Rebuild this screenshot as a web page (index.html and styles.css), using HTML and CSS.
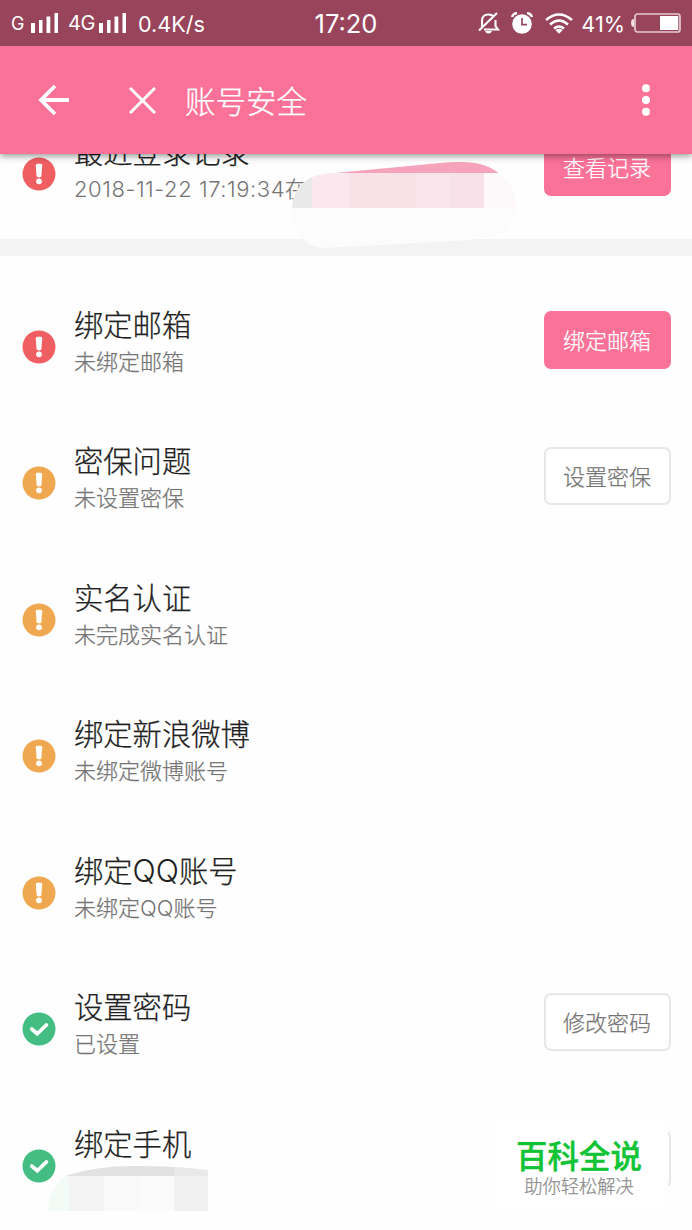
FILE: index.html
```html
<!DOCTYPE html>
<html lang="zh-CN">
<head>
<meta charset="utf-8">
<title>账号安全</title>
<link rel="stylesheet" href="styles.css">
</head>
<body>
<svg class="defs" width="0" height="0">
  <symbol id="warn" viewBox="0 0 34 34"><circle cx="17" cy="17" r="16.5" fill="currentColor"/><path d="M13.8 8.3Q13.8 6.8 15.3 6.8H18.7Q20.2 6.8 20.2 8.3L19.4 19.3Q19.3 20.4 17 20.4T14.6 19.3Z" fill="#fff"/><circle cx="17" cy="24.3" r="2.9" fill="#fff"/></symbol>
  <symbol id="ok" viewBox="0 0 34 34"><circle cx="17" cy="17" r="16.5" fill="currentColor"/><path d="M9.8 17.1L15.2 21.8L24.4 13" fill="none" stroke="#fff" stroke-width="3.8" stroke-linecap="round"/></symbol>
  <symbol id="signal" viewBox="0 0 28 20"><path d="M0 10h4v10H0zM8 7h3.5v13H8zM15.5 3.5h3.8V20h-3.8zM23.5 0h3.5v20h-3.5z" fill="#fff"/></symbol>
</svg>
<div class="screen">
  <div class="status">
    <div class="status-left">
      <span class="net g">G</span><svg class="signal"><use href="#signal"/></svg>
      <span class="net lte">4G</span><svg class="signal"><use href="#signal"/></svg>
      <span class="speed">0.4K/s</span>
    </div>
    <span class="clock">17:20</span>
    <div class="status-right">
      <svg class="bell" width="22" height="22" viewBox="0 0 22 22" fill="none" stroke="#fff" stroke-width="2.1"><path d="M4 15V9Q4 2.5 10.5 2.5Q14 2.5 15.5 4.5M17.5 8V14L20 17.5H6M1 18.5L19 1"/><path d="M7 19h7q-1 2.6-3.5 2.6T7 19z" fill="#fff" stroke="none"/></svg>
      <svg class="alarm" width="22" height="22" viewBox="0 0 22 22"><circle cx="11" cy="12" r="9.8" fill="#fff"/><path d="M1 5Q2 1.5 6 1M21 5Q20 1.5 16 1" fill="none" stroke="#fff" stroke-width="2.3"/><path d="M11 6v6.7h5" fill="none" stroke="#98455c" stroke-width="1.7"/></svg>
      <svg class="wifi" width="28" height="21" viewBox="0 0 28 21" fill="none" stroke="#fff" stroke-width="2.4"><path d="M1 7Q14-4 27 7M5 11.5Q14 3.7 23 11.5M9 15.5Q14 11.3 19 15.5"/><path d="M10.3 17Q14 14.7 17.7 17L14 20.7Z" fill="#fff" stroke="none"/></svg>
      <span class="percent">41%</span>
      <svg class="battery" width="50" height="20" viewBox="0 0 50 20"><rect x="4" y="1" width="45" height="18" rx="2.5" fill="none" stroke="#e4c9d0" stroke-width="1.7"/><path d="M3 6Q0 6 0 10T3 14Z" fill="#f0dfe3"/><path d="M29 3h18.3v14H29z" fill="#fff"/></svg>
    </div>
  </div>
  <header class="appbar">
    <svg class="back" width="32" height="32" viewBox="0 0 32 32" fill="none" stroke="#fff" stroke-width="3.8"><path d="M31 16H3M17 2L3 16L17 30"/></svg>
    <svg class="close" width="27" height="27" viewBox="0 0 27 27" stroke="#fff" stroke-width="3"><path d="M1 1L26 26M26 1L1 26"/></svg>
    <h1 class="heading">账号安全</h1>
    <svg class="more" width="10" height="32" viewBox="0 0 10 32" fill="#fff"><circle cx="5" cy="4.3" r="4"/><circle cx="5" cy="16" r="4"/><circle cx="5" cy="27.7" r="4"/></svg>
  </header>
  <main class="list">
    <section class="row row-log">
      <svg class="icon red"><use href="#warn"/></svg>
      <div class="info"><h2 class="title">最近登录记录</h2><p class="sub"><span class="date">2018-11-22 17:19:34</span>在</p></div>
      <button class="btn primary">查看记录</button>
      <svg class="mask-log" width="226" height="88" viewBox="0 0 226 88">
        <clipPath id="logclip"><path d="M2 50C2 28 14 14 35 12L150 1C190-3 202 5 212 14C222 22 226 33 226 43C226 62 213 75 195 76L180 78L35 86C15 86 2 69 2 50Z"/></clipPath>
        <g clip-path="url(#logclip)"><path fill="#fcfcfc" d="M0 0h226v88H0z"/><path fill="#f5a4bc" d="M0 0h226v11H0z"/><path fill="#e9e9e9" d="M0 11h22v35H0z"/><path fill="#fae8ee" d="M22 11h37v35H22z"/><path fill="#f9e1e8" d="M59 11h67v35H59z"/><path fill="#f9e6ec" d="M126 11h34v35h-34z"/><path fill="#f8e1e8" d="M160 11h34v35h-34z"/><path fill="#fdf9fb" d="M194 11h32v35h-32z"/></g>
      </svg>
    </section>
    <div class="divider"></div>
    <section class="row"><svg class="icon red"><use href="#warn"/></svg><div class="info"><h2 class="title">绑定邮箱</h2><p class="sub">未绑定邮箱</p></div><button class="btn primary">绑定邮箱</button></section>
    <section class="row"><svg class="icon amber"><use href="#warn"/></svg><div class="info"><h2 class="title">密保问题</h2><p class="sub">未设置密保</p></div><button class="btn">设置密保</button></section>
    <section class="row"><svg class="icon amber"><use href="#warn"/></svg><div class="info"><h2 class="title">实名认证</h2><p class="sub">未完成实名认证</p></div></section>
    <section class="row"><svg class="icon amber"><use href="#warn"/></svg><div class="info"><h2 class="title">绑定新浪微博</h2><p class="sub">未绑定微博账号</p></div></section>
    <section class="row"><svg class="icon amber"><use href="#warn"/></svg><div class="info"><h2 class="title">绑定<span class="latin">QQ</span>账号</h2><p class="sub">未绑定<span class="latin">QQ</span>账号</p></div></section>
    <section class="row"><svg class="icon green"><use href="#ok"/></svg><div class="info"><h2 class="title">设置密码</h2><p class="sub">已设置</p></div><button class="btn">修改密码</button></section>
    <section class="row">
      <svg class="icon green"><use href="#ok"/></svg><div class="info"><h2 class="title">绑定手机</h2></div><span class="btn"></span>
      <svg class="mask-phone" width="160" height="45" viewBox="0 0 160 45">
        <clipPath id="phoneclip"><path d="M0 45Q2 19 20 9Q50 0 84 0Q130 0 160 4V45Z"/></clipPath>
        <g clip-path="url(#phoneclip)"><path fill="#e2e2e2" d="M0 0h126v10H0z"/><path fill="#e9e9e9" d="M126 0h34v10h-34z"/><path fill="#f2fbf6" d="M0 10h21v35H0z"/><path fill="#f4f4f4" d="M21 10h35v35H21z"/><path fill="#f9f9f9" d="M56 10h35v35H56z"/><path fill="#fbfbfb" d="M91 10h35v35H91z"/><path fill="#f1f1f1" d="M126 10h34v35h-34z"/></g>
      </svg>
    </section>
  </main>
  <div class="brand"><strong class="brand-name">百科全说</strong><span class="brand-note">助你轻松解决</span></div>
</div>
</body>
</html>
```
FILE: styles.css
```css
* { box-sizing: border-box; }
body { margin: 0; background: #fff; font-family: "Noto Sans CJK SC", sans-serif; font-weight: 300; -webkit-text-stroke: .25px currentColor; }
h1, h2, p { margin: 0; font-weight: 300; }
.defs { position: absolute; }
.screen { position: relative; width: 692px; height: 1230px; overflow: hidden; background: #fefefe; }
.status { position: relative; z-index: 3; display: flex; align-items: center; height: 46px; padding: 0 11px; background: #98455c; color: #fff; font-family: Inter, sans-serif; font-weight: 400; -webkit-text-stroke: 0; }
.status-left, .status-right { display: flex; align-items: center; flex: 1; white-space: nowrap; }
.status-right { justify-content: flex-end; }
.signal { width: 28px; height: 20px; flex: none; }
.net { font-size: 20px; letter-spacing: -.5px; flex: none; }
.g { width: 20px; font-size: 18px; }
.lte { width: 31px; margin-left: 9px; }
.speed { margin-left: 11px; font-size: 21.6px; padding-top: 1px; }
.clock { font-size: 25.5px; width: 64px; text-align: center; padding-top: 1px; }
.alarm { margin-left: 11px; }
.wifi { margin-left: 12px; }
.percent { margin-left: 8px; font-size: 21.7px; padding-top: 1px; }
.battery { margin-left: 6px; }
.appbar { position: relative; z-index: 2; display: flex; align-items: center; height: 108px; padding: 0 41px 0 38px; background: #fb7299; box-shadow: 0 2px 7px rgba(0,0,0,.42); }
.close { margin-left: 59px; }
.heading { margin-left: 29px; color: #fff; font-size: 30.5px; line-height: 40px; }
.more { margin-left: auto; }
.list { margin-top: -71px; }
.row { position: relative; display: flex; align-items: flex-start; height: 136.45px; padding: 0 21px 0 22px; }
.row-log { height: 156px; }
.divider { height: 17px; background: #f3f3f3; }
.icon { width: 34px; height: 34px; margin-top: 74px; flex: none; }
.red { color: #ef5f62; }
.amber { color: #f0a850; }
.green { color: #43bd82; }
.info { flex: 1; margin: 49px 0 0 18px; }
.title { color: #212121; font-size: 29.3px; line-height: 37px; }
.sub { color: #757575; font-size: 22px; line-height: 37px; white-space: nowrap; }
.latin, .date { font-family: Inter, sans-serif; line-height: 1; -webkit-text-stroke: 0; }
.title .latin { font-size: 30.5px; }
.date { letter-spacing: .55px; }
.btn { width: 127px; height: 58px; margin-top: 55px; padding: 0 1px 2px 0; border: 2px solid #e7e7e7; border-radius: 7px; background: #fff; color: #757575; font: 300 22px/50px "Noto Sans CJK SC", sans-serif; text-align: center; }
.primary { border-color: #fb7299; background: #fb7299; color: #fff; }
.mask-log { position: absolute; left: 290px; top: 79px; }
.mask-phone { position: absolute; left: 48px; top: 91px; }
.brand { position: absolute; left: 490px; top: 1120px; width: 178px; height: 90px; padding-top: 14px; background: #fff; text-align: center; }
.brand-name { display: block; color: #10c435; font-size: 31.5px; font-weight: 500; line-height: 40px; -webkit-text-stroke: .4px currentColor; }
.brand-note { display: block; color: #8c8c8c; font-size: 18.3px; line-height: 22px; }
```
